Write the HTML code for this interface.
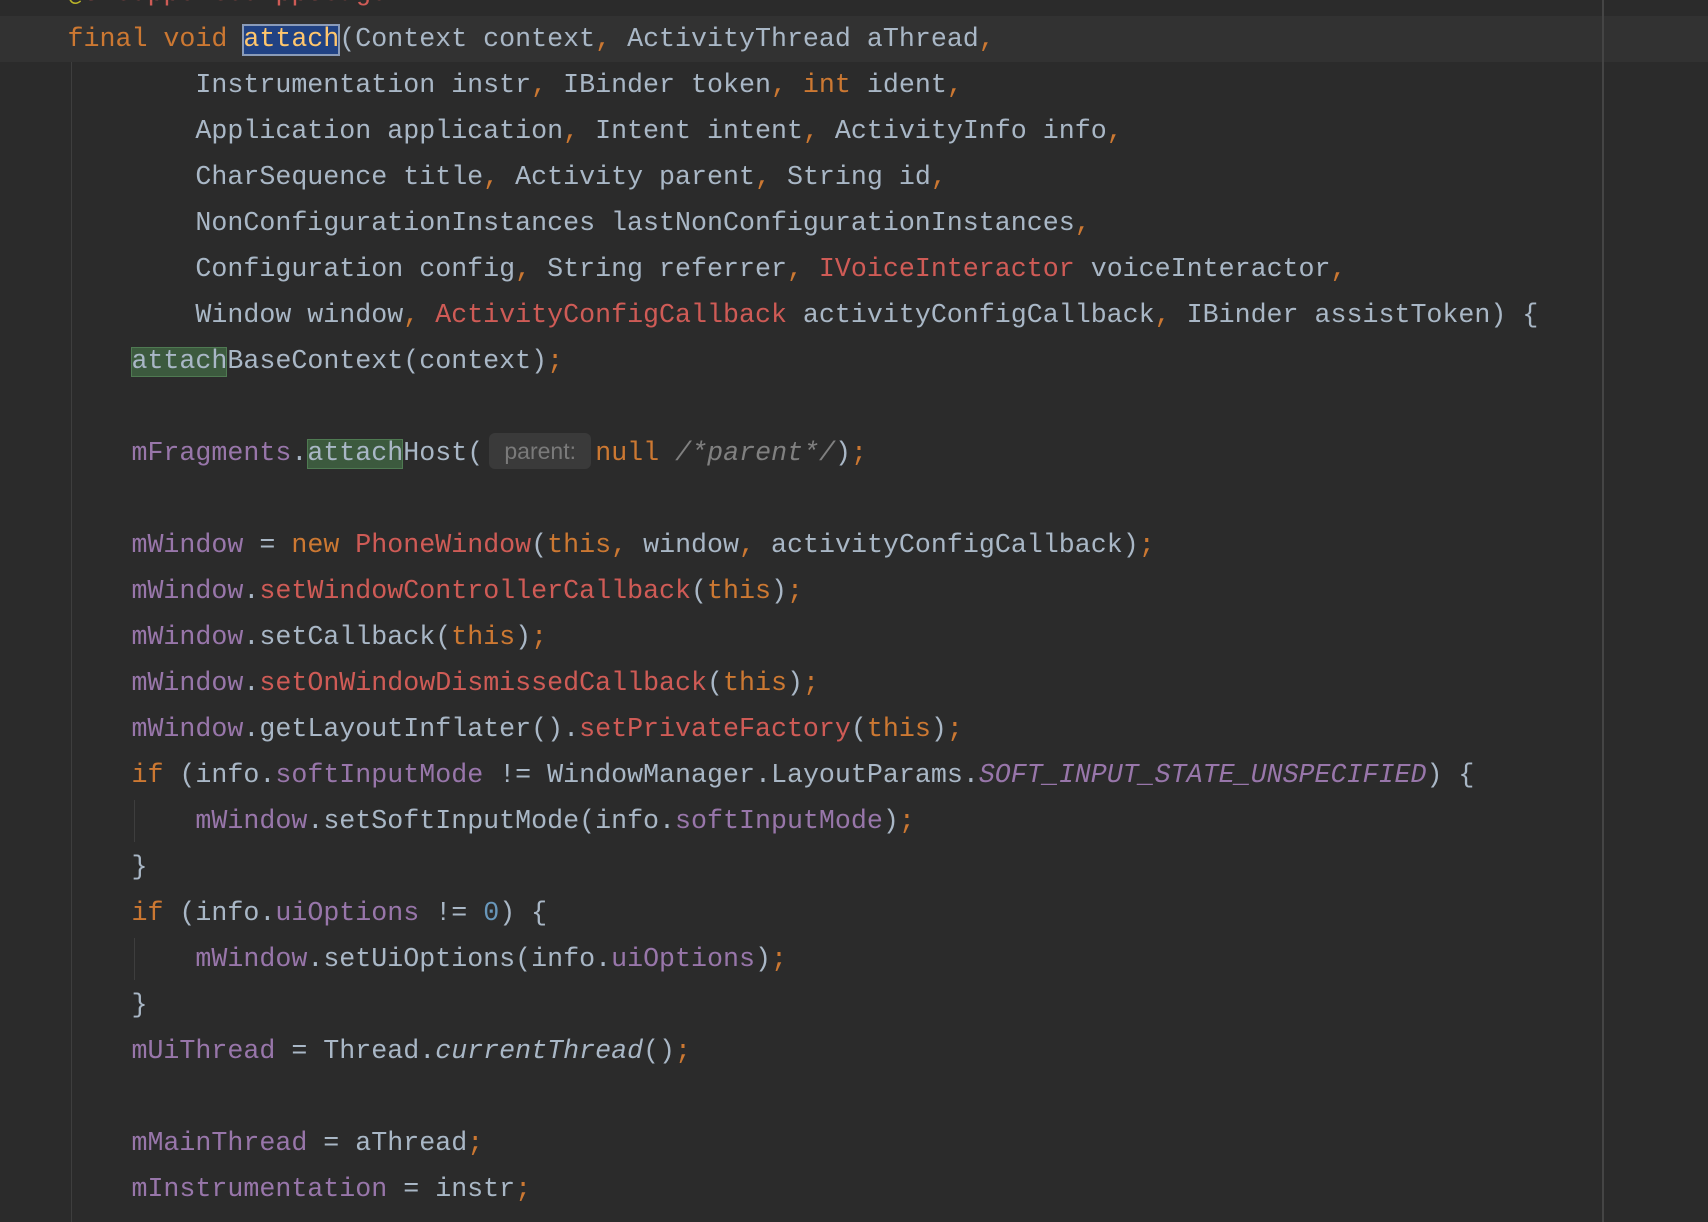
<!DOCTYPE html>
<html><head><meta charset="utf-8"><style>
html,body{margin:0;padding:0;background:#2b2b2b;width:1708px;height:1222px;overflow:hidden;position:relative}
.l{position:absolute;left:67.5px;height:46px;line-height:46px;white-space:pre;font-family:"Liberation Mono",monospace;font-size:26.65px;color:#a9b7c6;margin-top:1px}
.k{color:#cc7832}.f{color:#9876aa}.r{color:#cf5b56}.n{color:#6897bb}.c{color:#808080;font-style:italic}.i{font-style:italic}.y{color:#bbb529}
.fi{color:#9876aa;font-style:italic}
.caret{position:absolute;left:0;top:16px;width:1708px;height:46px;background:#323232}
.sel{background:#214283;outline:2px solid #8a9bb8;outline-offset:-1px;color:#ffc66d}
.g{background:#3c5a3e;outline:1px solid #4f7a52;outline-offset:-1px}
.hint{display:inline-block;width:102px;height:36px;line-height:36px;margin:0 4px 0 6px;background:#3a3a3a;border-radius:6px;color:#7a7a7a;font-family:"Liberation Sans",sans-serif;font-size:23px;text-align:center;vertical-align:middle;position:relative;top:-2px}
.vl{position:absolute;top:0;height:1222px;width:2px;background:#454545}
.ig{position:absolute;width:1px;background:#3e3e3e}
</style></head><body>
<div class="caret"></div>
<div class="vl" style="left:1602px"></div>
<div class="ig" style="left:71px;top:62px;height:1160px"></div>
<div class="ig" style="left:134px;top:800px;height:42px"></div>
<div class="ig" style="left:134px;top:938px;height:42px"></div>
<div class="l" style="top:-30px"><span class="y">@</span><span class="r">UnsupportedAppUsage</span></div>
<div class="l" style="top:16px"><span class="k">final void </span><span class="sel">attach</span>(Context context<span class="k">, </span>ActivityThread aThread<span class="k">,</span></div>
<div class="l" style="top:62px">        Instrumentation instr<span class="k">, </span>IBinder token<span class="k">, int </span>ident<span class="k">,</span></div>
<div class="l" style="top:108px">        Application application<span class="k">, </span>Intent intent<span class="k">, </span>ActivityInfo info<span class="k">,</span></div>
<div class="l" style="top:154px">        CharSequence title<span class="k">, </span>Activity parent<span class="k">, </span>String id<span class="k">,</span></div>
<div class="l" style="top:200px">        NonConfigurationInstances lastNonConfigurationInstances<span class="k">,</span></div>
<div class="l" style="top:246px">        Configuration config<span class="k">, </span>String referrer<span class="k">, </span><span class="r">IVoiceInteractor</span> voiceInteractor<span class="k">,</span></div>
<div class="l" style="top:292px">        Window window<span class="k">, </span><span class="r">ActivityConfigCallback</span> activityConfigCallback<span class="k">, </span>IBinder assistToken) {</div>
<div class="l" style="top:338px">    <span class="g">attach</span>BaseContext(context)<span class="k">;</span></div>
<div class="l" style="top:430px">    <span class="f">mFragments</span>.<span class="g">attach</span>Host(<span class="hint">parent:</span><span class="k">null </span><span class="c">/*parent*/</span>)<span class="k">;</span></div>
<div class="l" style="top:522px">    <span class="f">mWindow</span> = <span class="k">new </span><span class="r">PhoneWindow</span>(<span class="k">this, </span>window<span class="k">, </span>activityConfigCallback)<span class="k">;</span></div>
<div class="l" style="top:568px">    <span class="f">mWindow</span>.<span class="r">setWindowControllerCallback</span>(<span class="k">this</span>)<span class="k">;</span></div>
<div class="l" style="top:614px">    <span class="f">mWindow</span>.setCallback(<span class="k">this</span>)<span class="k">;</span></div>
<div class="l" style="top:660px">    <span class="f">mWindow</span>.<span class="r">setOnWindowDismissedCallback</span>(<span class="k">this</span>)<span class="k">;</span></div>
<div class="l" style="top:706px">    <span class="f">mWindow</span>.getLayoutInflater().<span class="r">setPrivateFactory</span>(<span class="k">this</span>)<span class="k">;</span></div>
<div class="l" style="top:752px">    <span class="k">if </span>(info.<span class="f">softInputMode</span> != WindowManager.LayoutParams.<span class="fi">SOFT_INPUT_STATE_UNSPECIFIED</span>) {</div>
<div class="l" style="top:798px">        <span class="f">mWindow</span>.setSoftInputMode(info.<span class="f">softInputMode</span>)<span class="k">;</span></div>
<div class="l" style="top:844px">    }</div>
<div class="l" style="top:890px">    <span class="k">if </span>(info.<span class="f">uiOptions</span> != <span class="n">0</span>) {</div>
<div class="l" style="top:936px">        <span class="f">mWindow</span>.setUiOptions(info.<span class="f">uiOptions</span>)<span class="k">;</span></div>
<div class="l" style="top:982px">    }</div>
<div class="l" style="top:1028px">    <span class="f">mUiThread</span> = Thread.<span class="i">currentThread</span>()<span class="k">;</span></div>
<div class="l" style="top:1120px">    <span class="f">mMainThread</span> = aThread<span class="k">;</span></div>
<div class="l" style="top:1166px">    <span class="f">mInstrumentation</span> = instr<span class="k">;</span></div>
</body></html>
